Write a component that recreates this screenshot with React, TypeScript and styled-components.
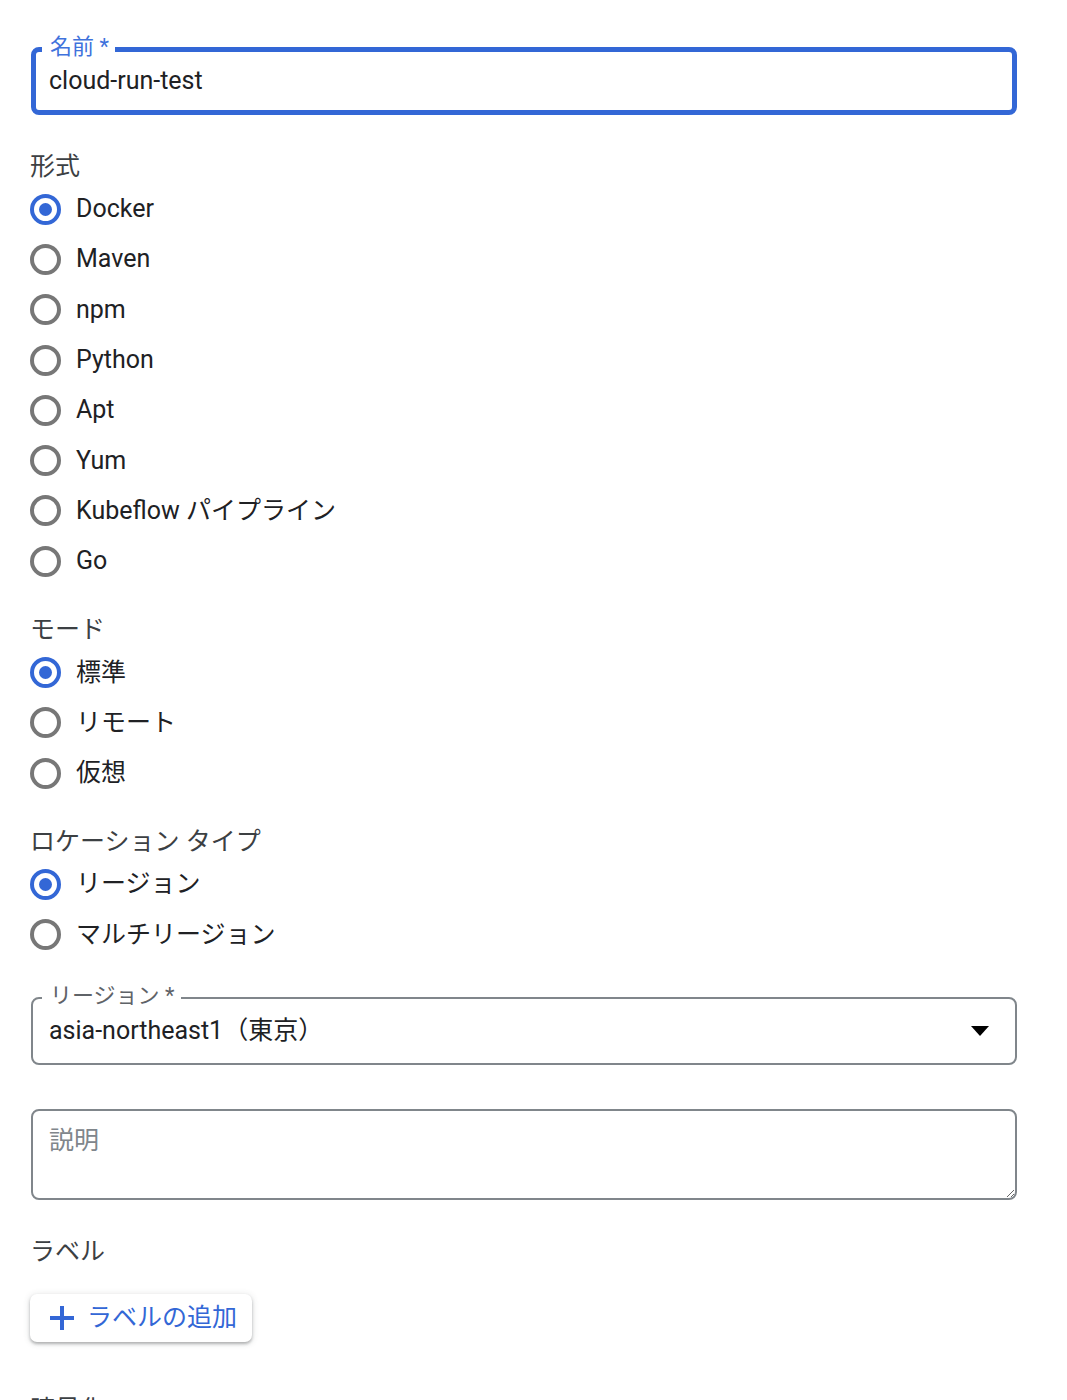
import React from "react";
import styled, { createGlobalStyle } from "styled-components";

const Global = createGlobalStyle`
  html, body { margin: 0; padding: 0; background: #ffffff; }
  body {
    font-family: Roboto, "Noto Sans CJK JP", "Noto Sans", sans-serif;
    color: #202124;
  }
  * { box-sizing: border-box; }
`;

const BLUE = "#3367d6";

const Page = styled.div`
  padding: 47px 50px 40px 31px;
  width: 1067px;
  display: flex;
  flex-direction: column;
`;

const OutlinedField = styled.div<{ $focused?: boolean; $mt?: number }>`
  position: relative;
  width: 986px;
  height: 68px;
  margin-top: ${(p) => p.$mt ?? 0}px;
  border: ${(p) => (p.$focused ? `5px solid ${BLUE}` : "2px solid #80868b")};
  border-radius: 8px;
  display: flex;
  align-items: center;
  padding-left: ${(p) => (p.$focused ? 13 : 16)}px;
  padding-right: 26px;
`;

const FloatLabel = styled.span<{ $focused?: boolean }>`
  position: absolute;
  left: ${(p) => (p.$focused ? 6 : 9)}px;
  top: ${(p) => (p.$focused ? -18 : -16)}px;
  padding: 0 6px 0 8px;
  background: #ffffff;
  font-size: 22px;
  line-height: 26px;
  color: ${(p) => (p.$focused ? "#3f72dc" : "#5f6368")};
  white-space: nowrap;
`;

const FieldValue = styled.span`
  flex: 1;
  font-size: 25px;
  line-height: 32px;
  color: #202124;
  white-space: nowrap;
`;

const Arrow = styled.svg`
  width: 18px;
  height: 10px;
  flex: none;
`;

const Heading = styled.div<{ $mt: number }>`
  margin-top: ${(p) => p.$mt}px;
  margin-bottom: 1px;
  font-size: 25px;
  line-height: 32px;
  color: #3c4043;
  margin-left: -1px;
`;

const RadioGroup = styled.div`
  display: flex;
  flex-direction: column;
`;

const RadioRow = styled.label`
  height: 50.3px;
  display: flex;
  align-items: center;
  gap: 15px;
  margin-left: -1px;
  cursor: pointer;
`;

const RadioCircle = styled.span<{ $checked?: boolean }>`
  width: 31px;
  height: 31px;
  border-radius: 50%;
  border: 4px solid ${(p) => (p.$checked ? BLUE : "#777777")};
  display: flex;
  align-items: center;
  justify-content: center;
  flex: none;
  &::after {
    content: "";
    width: 13px;
    height: 13px;
    border-radius: 50%;
    background: ${(p) => (p.$checked ? BLUE : "transparent")};
  }
`;

const RadioText = styled.span`
  font-size: 25px;
  line-height: 32px;
  color: #202124;
  white-space: nowrap;
`;

const TextArea = styled.textarea`
  margin-top: 44px;
  width: 986px;
  height: 91px;
  border: 2px solid #80868b;
  border-radius: 8px;
  padding: 14px 16px;
  font-family: Roboto, "Noto Sans CJK JP", sans-serif;
  font-size: 25px;
  line-height: 32px;
  color: #202124;
  resize: vertical;
  outline: none;
  &::placeholder {
    color: #80868b;
  }
`;

const AddButton = styled.button`
  margin-top: 25px;
  margin-left: -1px;
  align-self: flex-start;
  height: 48px;
  padding: 0 15px 0 20px;
  display: flex;
  align-items: center;
  gap: 13px;
  border: none;
  border-radius: 7px;
  background: #ffffff;
  box-shadow: 0 2px 3px rgba(60, 64, 67, 0.35), 0 1px 6px 1px rgba(60, 64, 67, 0.12);
  font-family: Roboto, "Noto Sans CJK JP", sans-serif;
  font-size: 25px;
  line-height: 32px;
  color: ${BLUE};
  cursor: pointer;
`;

const PlusIcon = styled.svg`
  width: 24px;
  height: 24px;
  flex: none;
`;

type Group = { title: string; mt: number; options: string[]; checked: number };

const groups: Group[] = [
  {
    title: "形式",
    mt: 36,
    options: ["Docker", "Maven", "npm", "Python", "Apt", "Yum", "Kubeflow パイプライン", "Go"],
    checked: 0,
  },
  { title: "モード", mt: 28, options: ["標準", "リモート", "仮想"], checked: 0 },
  { title: "ロケーション タイプ", mt: 28, options: ["リージョン", "マルチリージョン"], checked: 0 },
];

export default function App() {
  return (
    <>
      <Global />
      <Page>
        <OutlinedField $focused>
          <FloatLabel $focused>名前 *</FloatLabel>
          <FieldValue>cloud-run-test</FieldValue>
        </OutlinedField>

        {groups.map((g) => (
          <React.Fragment key={g.title}>
            <Heading $mt={g.mt}>{g.title}</Heading>
            <RadioGroup>
              {g.options.map((o, i) => (
                <RadioRow key={o}>
                  <RadioCircle $checked={i === g.checked} />
                  <RadioText>{o}</RadioText>
                </RadioRow>
              ))}
            </RadioGroup>
          </React.Fragment>
        ))}

        <OutlinedField $mt={37}>
          <FloatLabel>リージョン *</FloatLabel>
          <FieldValue>asia-northeast1（東京）</FieldValue>
          <Arrow viewBox="0 0 18 10">
            <polygon points="0,0 18,0 9,10" fill="#000000" />
          </Arrow>
        </OutlinedField>

        <TextArea placeholder="説明" />

        <Heading $mt={36}>ラベル</Heading>

        <AddButton type="button">
          <PlusIcon viewBox="0 0 24 24">
            <rect x="10" y="0" width="4" height="24" fill={BLUE} />
            <rect x="0" y="10" width="24" height="4" fill={BLUE} />
          </PlusIcon>
          ラベルの追加
        </AddButton>

        <Heading $mt={52}>暗号化</Heading>
      </Page>
    </>
  );
}
